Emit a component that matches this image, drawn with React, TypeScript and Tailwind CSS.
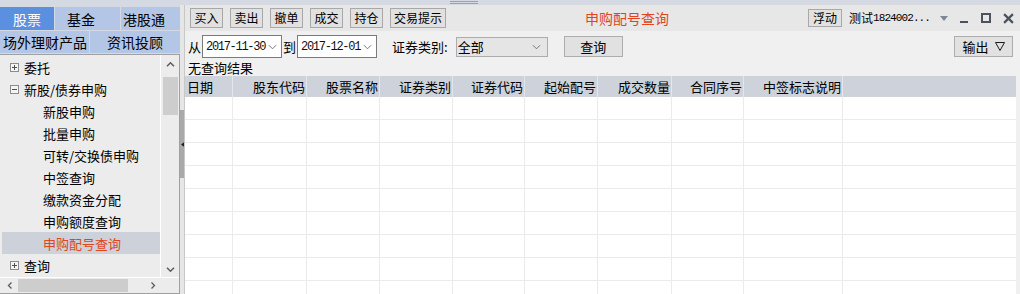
import React from "react";

const cjk = { fontFamily: '"Noto Sans CJK SC", "Noto Sans", sans-serif' };
const mono = { fontFamily: '"Liberation Mono", "Noto Sans CJK SC", monospace' };

const columns = [
  { label: "日期", left: true },
  { label: "股东代码" },
  { label: "股票名称" },
  { label: "证券类别" },
  { label: "证券代码" },
  { label: "起始配号" },
  { label: "成交数量" },
  { label: "合同序号" },
  { label: "中签标志说明" },
];

const toolButtons = ["买入", "卖出", "撤单", "成交", "持仓", "交易提示"];

const treeItems: { label: string; level: number; box?: "+" | "-"; active?: boolean }[] = [
  { label: "委托", level: 0, box: "+" },
  { label: "新股/债券申购", level: 0, box: "-" },
  { label: "新股申购", level: 1 },
  { label: "批量申购", level: 1 },
  { label: "可转/交换债申购", level: 1 },
  { label: "中签查询", level: 1 },
  { label: "缴款资金分配", level: 1 },
  { label: "申购额度查询", level: 1 },
  { label: "申购配号查询", level: 1, active: true },
  { label: "查询", level: 0, box: "+" },
];

const Chevron = ({ dir, className }: { dir: "up" | "down" | "left" | "right"; className?: string }) => {
  const d = {
    up: "M1 6 L5 2 L9 6",
    down: "M1 2 L5 6 L9 2",
    left: "M6 1 L2 5 L6 9",
    right: "M2 1 L6 5 L2 9",
  }[dir];
  const vb = dir === "up" || dir === "down" ? "0 0 10 8" : "0 0 8 10";
  return (
    <svg viewBox={vb} className={className} fill="none" stroke="#5f5f5f" strokeWidth="1.8">
      <path d={d} />
    </svg>
  );
};

const ThinChevron = () => (
  <svg viewBox="0 0 10 6" className="w-[9px] h-[6px]" fill="none" stroke="#6a6a6a" strokeWidth="1">
    <path d="M1 1 L5 5 L9 1" />
  </svg>
);

const ExpandBox = ({ sign }: { sign: "+" | "-" }) => (
  <svg viewBox="0 0 9 9" className="w-[9px] h-[9px]" shapeRendering="crispEdges">
    <rect x="0.5" y="0.5" width="8" height="8" fill="#f4f4f4" stroke="#8c8c8c" />
    <path d="M2 4.5 H7" stroke="#505050" />
    {sign === "+" && <path d="M4.5 2 V7" stroke="#505050" />}
  </svg>
);

const DateBox = ({ value }: { value: string }) => (
  <div className="w-[80px] h-[23px] border border-[#7a7a7a] bg-white flex items-center pl-[3px] pr-[4px]">
    <span className="flex-1 text-[12px] tracking-[-1.3px] text-[#111] leading-none" style={mono}>
      {value}
    </span>
    <ThinChevron />
  </div>
);

export default function App() {
  return (
    <div className="w-[1020px] h-[294px] bg-[#f0f0f0] flex flex-col overflow-hidden text-black" style={cjk}>
      {/* top strip */}
      <div className="h-[5px] bg-[#d5dae2] flex justify-center shrink-0">
        <div className="w-[28px] ml-[-93px] pt-[1px] flex flex-col gap-[1px]">
          <div className="h-px bg-[#9ba3ae]" />
          <div className="h-px bg-[#9ba3ae]" />
        </div>
      </div>

      <div className="flex flex-1 min-h-0">
        {/* sidebar */}
        <div className="w-[180px] flex flex-col bg-[#d5dae2] pt-[2px]">
          <div className="flex h-[23px] gap-px">
            <div className="w-[54px] bg-[#5b8fdf] text-white text-[14px] flex items-center justify-center leading-none">
              股票
            </div>
            <div className="w-[65px] bg-[#b3c6e5] text-[14px] flex items-center pl-[12px] leading-none">基金</div>
            <div className="flex-1 bg-[#b3c6e5] text-[14px] flex items-center pl-[2px] leading-none">港股通</div>
          </div>
          <div className="flex h-[22px] gap-px mt-px">
            <div className="w-[89px] bg-[#b3c6e5] text-[14px] flex items-center pl-[3px] leading-none">场外理财产品</div>
            <div className="flex-1 bg-[#b3c6e5] text-[14px] flex items-center justify-center leading-none">资讯投顾</div>
          </div>
          <div className="mt-px flex-1 border-t border-r border-b border-[#a0a0a0] bg-[#ececec] flex flex-col min-h-0">
            <div className="flex flex-1 min-h-0">
              <div className="w-[161px] border-r border-white pt-px pl-[2px]">
                {treeItems.map((item) => (
                  <div
                    key={item.label}
                    className={`h-[22px] flex items-center text-[13px] leading-none ${
                      item.active ? "bg-[#cdd1da] text-[#e2441c]" : ""
                    }`}
                  >
                    {item.level === 0 ? (
                      <>
                        <span className="ml-[8px] w-[14px] flex items-center">
                          {item.box && <ExpandBox sign={item.box} />}
                        </span>
                        <span>{item.label}</span>
                      </>
                    ) : (
                      <span className="ml-[41px]">{item.label}</span>
                    )}
                  </div>
                ))}
              </div>
              {/* vertical scrollbar */}
              <div className="flex-1 flex flex-col items-center pt-[6px]">
                <Chevron dir="up" className="w-[9px] h-[7px]" />
                <div className="mt-[9px] w-[15px] h-[38px] bg-[#cdcdcd]" />
                <div className="flex-1" />
                <Chevron dir="down" className="w-[9px] h-[7px] mb-[4px]" />
              </div>
            </div>
            {/* horizontal scrollbar */}
            <div className="h-[16px] border-t border-white flex items-center">
              <Chevron dir="left" className="w-[6px] h-[9px] ml-[7px]" />
              <div className="ml-[5px] w-[110px] h-[13px] bg-[#cdcdcd]" />
              <Chevron dir="right" className="w-[6px] h-[9px] ml-[22px]" />
            </div>
          </div>
        </div>

        {/* splitter */}
        <div className="w-[5px] bg-[#e6e6e6] flex flex-col border-r border-[#c8c8c8]">
          <div className="h-[105px]" />
          <div className="h-[68px] bg-[#a9a9a9] flex items-center justify-center">
            <svg viewBox="0 0 4 6" className="w-[3px] h-[5px]">
              <path d="M4 0 L0 3 L4 6 Z" fill="#202020" />
            </svg>
          </div>
        </div>

        {/* main */}
        <div className="flex-1 flex flex-col min-w-0">
          {/* toolbar */}
          <div className="h-[26px] bg-[#e7e7e7] flex items-center pl-[5px] pr-[6px] shrink-0">
            <div className="flex gap-[7px]">
              {toolButtons.map((b) => (
                <button
                  key={b}
                  className="h-[20px] px-[3px] min-w-[33px] border border-[#a8a8a8] bg-[#e1e1e1] text-[12px] leading-none"
                >
                  {b}
                </button>
              ))}
            </div>
            <div className="flex-1 text-center text-[14px] text-[#e2441c] leading-none">申购配号查询</div>
            <div className="flex items-center">
              <button className="h-[18px] w-[34px] border border-[#a8a8a8] bg-[#e1e1e1] text-[12px] leading-none">
                浮动
              </button>
              <span className="ml-[7px] text-[12px] leading-none">测试</span>
              <span className="text-[11px] tracking-[-0.9px] leading-none" style={mono}>
                1824002...
              </span>
              <svg viewBox="0 0 8 5" className="ml-[10px] w-[8px] h-[5px]">
                <path d="M0 0 H8 L4 5 Z" fill="#7d8894" />
              </svg>
              <svg viewBox="0 0 10 10" className="ml-[11px] w-[10px] h-[10px]" shapeRendering="crispEdges">
                <rect x="1" y="8" width="8" height="2" fill="#4b525b" />
              </svg>
              <svg viewBox="0 0 10 10" className="ml-[12px] w-[10px] h-[10px]" shapeRendering="crispEdges">
                <rect x="1" y="1" width="8" height="8" fill="none" stroke="#4b525b" strokeWidth="2" />
              </svg>
              <svg viewBox="0 0 10 10" className="ml-[12px] w-[11px] h-[11px]">
                <path d="M1 1 L9 9 M9 1 L1 9" stroke="#4b525b" strokeWidth="2" />
              </svg>
            </div>
          </div>

          {/* filter area */}
          <div className="h-[45px] flex flex-col shrink-0">
            <div className="flex items-center h-[23px] mt-[4px] pl-[3px] pr-[7px] text-[13px] leading-none">
              <span className="mr-[1px]">从</span>
              <DateBox value="2017-11-30" />
              <span className="ml-[1px] mr-[1px]">到</span>
              <DateBox value="2017-12-01" />
              <span className="ml-[15px]">证券类别:</span>
              <div className="ml-[8px] w-[92px] h-[20px] border border-[#acacac] bg-[#e5e5e5] flex items-center pl-[1px] pr-[6px]">
                <span className="flex-1">全部</span>
                <ThinChevron />
              </div>
              <button className="ml-[16px] w-[59px] h-[21px] border border-[#adadad] bg-[#e1e1e1] text-[13px] leading-none">
                查询
              </button>
              <div className="flex-1" />
              <button className="w-[59px] h-[21px] border border-[#adadad] bg-[#e1e1e1] text-[13px] leading-none flex items-center justify-center gap-[6px]">
                <span>输出</span>
                <svg viewBox="0 0 10 9" className="w-[10px] h-[9px]">
                  <path d="M0.5 0.5 H9.5 L5 8.5 Z" fill="none" stroke="#1a1a1a" />
                </svg>
              </button>
            </div>
            <div className="pl-[3px] mt-[3px] text-[13px] leading-none">无查询结果</div>
          </div>

          {/* table */}
          <div className="flex-1 flex min-h-0 pr-[4px]">
            <div className="flex-1 bg-white flex flex-col overflow-hidden">
              <div className="grid grid-cols-[48px_74px_73px_73px_72px_73px_74px_72px_99px_1fr] h-[21px] bg-[#cdd2db] shrink-0">
                {columns.map((c) => (
                  <div
                    key={c.label}
                    className={`border-r border-[#e4e6ea] flex items-center text-[13px] leading-none ${
                      c.left ? "pl-[2px]" : "justify-end pr-[1px]"
                    }`}
                  >
                    {c.label}
                  </div>
                ))}
                <div />
              </div>
              {Array.from({ length: 9 }).map((_, r) => (
                <div
                  key={r}
                  className="grid grid-cols-[48px_74px_73px_73px_72px_73px_74px_72px_99px_1fr] h-[23px] border-b border-[#ebebeb] shrink-0"
                >
                  {columns.map((c) => (
                    <div key={c.label} className="border-r border-[#ebebeb]" />
                  ))}
                  <div />
                </div>
              ))}
            </div>
          </div>
        </div>
      </div>
    </div>
  );
}
